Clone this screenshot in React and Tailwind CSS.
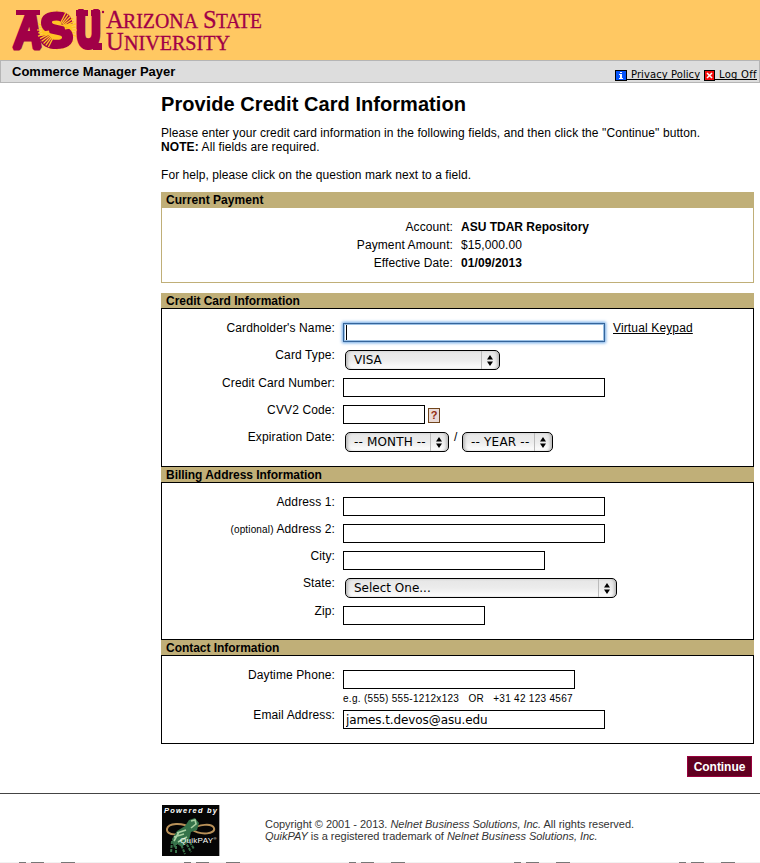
import React from "react";

const RAYS = Array.from({ length: 40 }, (_, i) => (i * Math.PI) / 20);

function AsuLogo() {
  return (
    <svg width="270" height="60" viewBox="0 0 270 60" className="block" role="img" aria-label="Arizona State University">
      <g fill="#a10047" stroke="#a10047" strokeLinejoin="bevel" fontFamily="Liberation Sans" fontWeight="bold">
        <text transform="translate(13 48) skewX(-6) scale(.76 1)" fontSize="51" strokeWidth="5">A</text>
        <rect x="16" y="10" width="24" height="5" stroke="none" />
        <text transform="translate(76.500 47) scale(.66 1)" fontSize="50" strokeWidth="6">U</text>
        <rect x="76" y="10" width="12" height="6" stroke="none" />
        <rect x="91" y="10" width="9" height="6" stroke="none" />
        <rect x="93" y="43" width="9" height="7" stroke="none" />
      </g>
      <circle cx="57" cy="30" r="15" fill="#ffc425" />
      {RAYS.map((a, i) => (
        <line
          key={i}
          x1={57 + 14 * Math.cos(a)}
          y1={30 + 14 * Math.sin(a)}
          x2={57 + (i % 2 ? 18 : 20) * Math.cos(a)}
          y2={30 + (i % 2 ? 18 : 20) * Math.sin(a)}
          stroke="#ffc425"
          strokeWidth="1.200"
        />
      ))}
      <text transform="translate(40 46.800) scale(1.030 1)" fontSize="48" fontFamily="Liberation Sans" fontWeight="bold" fill="#a10047" stroke="#a10047" strokeWidth="4">S</text>
      {RAYS.filter((a) => (a > 5.1 && a < 6.2) || (a > 2 && a < 3.1)).map((a) => (
        <line
          key={a}
          x1={57 + 8 * Math.cos(a)}
          y1={30 + 8 * Math.sin(a)}
          x2={57 + 19 * Math.cos(a)}
          y2={30 + 19 * Math.sin(a)}
          stroke="#ffc425"
          strokeWidth="1.300"
        />
      ))}
      <circle cx="103" cy="12" r="1.2" fill="#a10047" />
      <g fill="#a10047" stroke="#a10047" strokeWidth=".3" fontFamily="Liberation Serif">
        <text x="106" y="28" fontSize="24.5">A</text>
        <text x="123" y="28" fontSize="20" textLength="75" lengthAdjust="spacingAndGlyphs">RIZONA</text>
        <text x="203" y="28" fontSize="24.5">S</text>
        <text x="216" y="28" fontSize="20" textLength="46" lengthAdjust="spacingAndGlyphs">TATE</text>
        <text x="106" y="50" fontSize="24.5">U</text>
        <text x="124" y="50" fontSize="20" textLength="106" lengthAdjust="spacingAndGlyphs">NIVERSITY</text>
      </g>
    </svg>
  );
}

function InfoIcon() {
  return (
    <svg width="12" height="11" viewBox="0 0 12 11" shapeRendering="crispEdges" className="block">
      <rect width="12" height="11" fill="#000" />
      <rect x="1" y="1" width="10" height="9" fill="#0554fb" />
      <path d="M5 2h2v1H5zM4 4h3v4h1v1H4V8h1V5H4z" fill="#fff" />
    </svg>
  );
}

function CloseIcon() {
  return (
    <svg width="11" height="11" viewBox="0 0 11 11" className="block">
      <rect width="11" height="11" fill="#000" />
      <rect x="1" y="1" width="9" height="9" fill="#f40b0b" />
      <path d="M3 3l5 5M8 3l-5 5" stroke="#fff" strokeWidth="1.500" />
    </svg>
  );
}

function Section({ title, className, children }) {
  return (
    <section className={`flex flex-col ${className}`}>
      <h2 className="h-[15px] shrink-0 bg-[#c0af78] pl-[5px] text-[12px] leading-[16px] font-bold tracking-[-0.04px]">{title}</h2>
      <div className="flex-1 border border-black pt-[14px]">{children}</div>
    </section>
  );
}

function Row({ label, className = "h-[27px]", children }) {
  return (
    <div className={`flex items-start ${className}`}>
      <div className="-mt-[2px] w-[173px] shrink-0 text-right text-[12px] leading-[14px] tracking-[0.12px] whitespace-nowrap">{label}</div>
      <div className="ml-2 flex items-start">{children}</div>
    </div>
  );
}

function Field({ className = "w-[262px]", value = "", label }) {
  return (
    <input
      aria-label={label}
      defaultValue={value}
      className={`block h-[19px] border border-black bg-white px-[2px] font-['DejaVu_Sans',sans-serif] text-[12px] tracking-[-0.1px] outline-none ${className}`}
    />
  );
}

function Select({ className, children }) {
  return (
    <div className={`flex h-5 items-stretch overflow-hidden rounded-[5px] border border-black bg-linear-to-b from-[#e6e6e6] via-[#ececec] to-white font-['DejaVu_Sans',sans-serif] text-[12px] leading-[18px] shadow-[inset_3px_0_3px_-1px_#bbb,inset_-3px_0_3px_-1px_#bbb] ${className}`}>
      <span className="flex-1 pl-2 whitespace-nowrap">{children}</span>
      <span className="flex w-[18px] items-center border-l border-[#bbb] pl-[5px]">
        <svg width="6" height="11" viewBox="0 0 6 11">
          <path d="M3 0l3 4.500H0zM3 11l3-4.500H0z" />
        </svg>
      </span>
    </div>
  );
}

function PaymentRow({ label, children }) {
  return (
    <div className="flex h-[18px] text-[12px] leading-[18px] tracking-[0.1px]">
      <span className="w-[291px] text-right">{label}</span>
      <span className="ml-2">{children}</span>
    </div>
  );
}

function QuikPayBadge() {
  return (
    <svg width="58" height="51" viewBox="0 0 58 51" className="block">
      <rect width="58" height="51" fill="#050505" />
      <path d="M57.500 0v51" stroke="#aaa" />
      <path d="M29 23C20 17 6 18 5 24c-1 7 13 7 23 1 9-6 22-7 24-2 2 6-13 8-23 1" fill="none" stroke="#b89058" strokeWidth="2" />
      <path d="M27 15l6-2 4 5-2 7-6 2-2 8-7 7-5-3-3 4-2-9 5-8 8-5z" fill="#35734a" />
      <path d="M29 16l4-1 1 4-5 4M15 28l9-3M12 32l10-3M16 37l9-5M12 36l5-9" stroke="#a9d1a3" strokeWidth="1.600" fill="none" />
      <path d="M10 36l-1 12M14 37v11M18 37l5 12M23 36l6 11M26 34l6 10" stroke="#39734a" strokeWidth="2" strokeDasharray="3 1" />
      <g fill="#fff" fontFamily="Liberation Sans">
        <text x="2" y="8" fontSize="7.500" fontStyle="italic" fontWeight="bold" textLength="53">Powered by</text>
        <text x="18" y="37.500" fontSize="8" textLength="33">QuikPAY</text>
        <text x="51.500" y="35" fontSize="4">®</text>
      </g>
    </svg>
  );
}

export default function App() {
  return (
    <div className="flex h-[863px] w-[760px] flex-col overflow-hidden bg-white font-['Liberation_Sans',Arial,sans-serif] text-black">
      <header className="h-[60px] shrink-0 bg-[#ffc862]">
        <AsuLogo />
      </header>
      <nav className="flex h-[23px] shrink-0 items-start justify-between border border-[#b5b5b5] bg-[#dddddd] pr-[2px] pl-[11px]">
        <span className="text-[13px] leading-[22px] font-bold">Commerce Manager Payer</span>
        <div className="flex pt-[6px] font-['DejaVu_Sans',sans-serif] text-[10px] leading-[13px]">
          <a className="flex w-[85px] items-start">
            <span className="mt-[3px]"><InfoIcon /></span>
            <span className="mt-px h-[12px] flex-1 border-b border-black pl-1 tracking-[0.07px] whitespace-nowrap">Privacy Policy</span>
          </a>
          <a className="ml-1 flex w-[53px] items-start">
            <span className="mt-[3px]"><CloseIcon /></span>
            <span className="mt-px h-[12px] flex-1 border-b border-black pl-1 tracking-[0.25px] whitespace-nowrap">Log Off</span>
          </a>
        </div>
      </nav>

      <main className="ml-[161px] h-[710px] w-[593px] shrink-0">
        <h1 className="pt-[9px] text-[20px] leading-6 font-bold tracking-[0.05px]">Provide Credit Card Information</h1>
        <div className="pt-[10px] text-[12px] leading-[14px] whitespace-nowrap">
          <p className="tracking-[0.087px]">Please enter your credit card information in the following fields, and then click the "Continue" button.</p>
          <p className="tracking-[0.09px]"><b>NOTE:</b> All fields are required.</p>
          <p className="mt-[14px] tracking-[0.065px]">For help, please click on the question mark next to a field.</p>
        </div>

        <section className="mt-[10px] h-[91px]">
          <h2 className="h-4 bg-[#c0af78] pl-[5px] text-[12px] leading-4 font-bold tracking-[0.05px]">Current Payment</h2>
          <div className="h-[75px] border border-t-0 border-[#c0af78] pt-[10px]">
            <PaymentRow label="Account:"><b className="tracking-normal">ASU TDAR Repository</b></PaymentRow>
            <PaymentRow label="Payment Amount:">$15,000.00</PaymentRow>
            <PaymentRow label="Effective Date:"><b>01/09/2013</b></PaymentRow>
          </div>
        </section>

        <Section title="Credit Card Information" className="mt-[10px] h-[174px]">
          <Row label="Cardholder's Name:">
            <div className="flex h-[19px] w-[262px] items-center border border-[#35659b] bg-white pl-[2px] shadow-[inset_0_0_0_1px_#9bc0e4,0_0_3px_1px_#6aa6e4]">
              <span className="h-[15px] w-px bg-black" />
            </div>
            <a className="-mt-[2px] ml-2 text-[12px] leading-[14px] tracking-[0.14px] underline underline-offset-1">Virtual Keypad</a>
          </Row>
          <Row label="Card Type:" className="h-[28px]">
            <Select className="ml-[2px] w-[155px]">VISA</Select>
          </Row>
          <Row label="Credit Card Number:"><Field label="Credit Card Number" /></Row>
          <Row label="CVV2 Code:">
            <Field label="CVV2 Code" className="w-[82px]" />
            <span className="mt-[3px] ml-[3px] flex h-[15px] w-3 items-center justify-center border border-[#70451c] bg-[#eadad6] text-[11px] font-bold text-[#932b10]">?</span>
          </Row>
          <Row label="Expiration Date:">
            <Select className="ml-[2px] w-[104px] tracking-[0.15px]">-- MONTH --</Select>
            <span className="w-[13px] pl-[5px] text-[12px] leading-[10px]">/</span>
            <Select className="w-[91px] tracking-[0.2px]">-- YEAR --</Select>
          </Row>
        </Section>

        <Section title="Billing Address Information" className="h-[173px]">
          <Row label="Address 1:"><Field label="Address 1" /></Row>
          <Row label={<><span className="text-[10px] tracking-[0.15px]">(optional)</span> Address 2:</>}><Field label="Address 2" /></Row>
          <Row label="City:"><Field label="City" className="w-[202px]" /></Row>
          <Row label="State:" className="h-[28px]"><Select className="ml-[2px] w-[272px]">Select One...</Select></Row>
          <Row label="Zip:"><Field label="Zip" className="w-[142px]" /></Row>
        </Section>

        <Section title="Contact Information" className="h-[104px]">
          <Row label="Daytime Phone:" className="h-[40px]">
            <div>
              <Field label="Daytime Phone" className="w-[232px]" />
              <p className="mt-1 text-[10px] leading-3 tracking-[0.29px] whitespace-pre">e.g. (555) 555-1212x123   OR   +31 42 123 4567</p>
            </div>
          </Row>
          <Row label="Email Address:"><Field label="Email Address" value="james.t.devos@asu.edu" /></Row>
        </Section>

        <div className="mt-3 flex justify-end pr-[2px]">
          <button className="h-[21px] w-[65px] border border-[#99003d] bg-[#600020] text-[12px] leading-[18px] font-bold tracking-[-0.05px] text-white">Continue</button>
        </div>
      </main>

      <footer className="flex h-[69px] shrink-0 border-t border-[#444] pt-[11px] pl-[162px]">
        <QuikPayBadge />
        <div className="ml-[45px] pt-[13px] text-[11px] leading-3 tracking-[-0.03px] text-[#333]">
          <p>Copyright © 2001 - 2013. <i>Nelnet Business Solutions, Inc.</i> All rights reserved.</p>
          <p><i>QuikPAY</i> is a registered trademark of <i>Nelnet Business Solutions, Inc.</i></p>
        </div>
      </footer>
      <div className="flex h-px shrink-0 bg-[#f2f2f2]">
        {[0, 1, 2, 3, 4].map((i) => (
          <div key={i} className="flex w-[165px] shrink-0 pl-[19px]">
            <span className="h-px w-[7px] bg-[#777]" />
            <span className="ml-[5px] h-px w-[13px] bg-[#777]" />
            <span className="ml-[17px] h-px w-[14px] bg-[#777]" />
          </div>
        ))}
      </div>
    </div>
  );
}
